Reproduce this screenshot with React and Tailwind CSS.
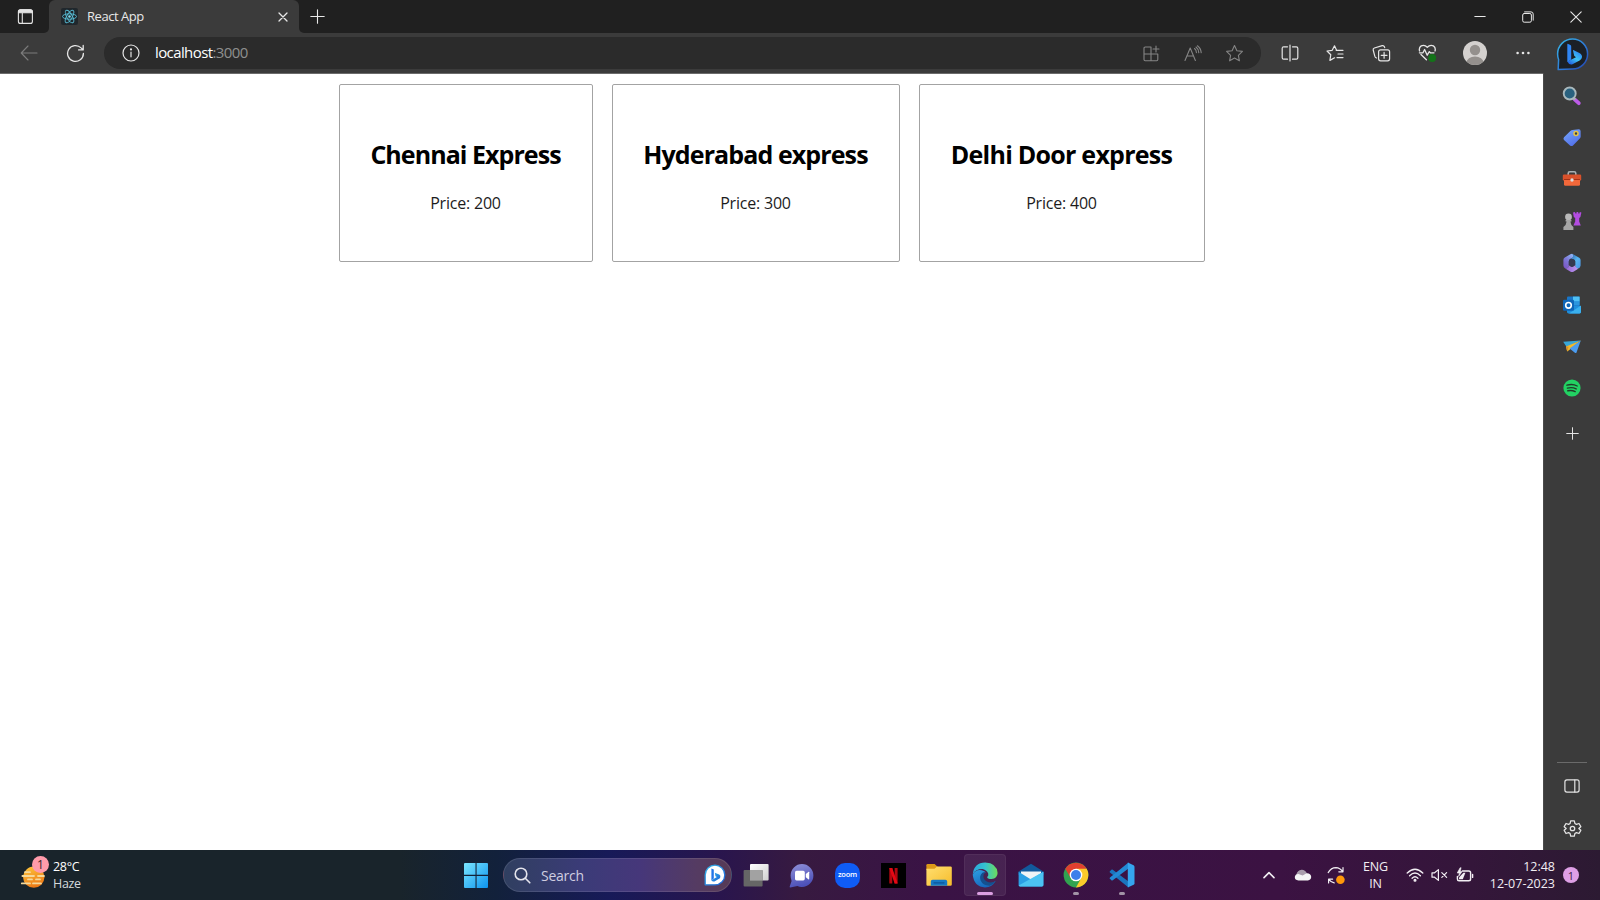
import React from "react";

const line = { fill: "none", stroke: "currentColor", strokeLinecap: "round", strokeLinejoin: "round" };

/* Icon cell: a fixed-width flex slot that centres its drawing */
function Cell({ className = "", children }) {
  return <div className={`flex h-full shrink-0 items-center justify-center ${className}`}>{children}</div>;
}

/* ---------- Title bar ---------- */
function TabActionsIcon() {
  return (
    <svg width="17" height="17" viewBox="0 0 17 17" className="text-[#e4e4e4]" {...line} strokeWidth="1.1">
      <rect x="1.4" y="1.8" width="14" height="13.6" rx="2" />
      <path d="M1.5 3.8Q1.5 1.8 3.5 1.8H13.3Q15.3 1.8 15.3 3.8V4.8H1.5Z" fill="currentColor" />
      <path d="M5.3 5V15" />
    </svg>
  );
}

function ReactIcon() {
  return (
    <svg width="17" height="17" viewBox="0 0 17 17" fill="none" stroke="#58bfd8" strokeWidth="0.9">
      <rect width="17" height="17" rx="2" fill="#20272c" stroke="none" />
      <ellipse cx="8.5" cy="8.5" rx="7" ry="2.7" />
      <ellipse cx="8.5" cy="8.5" rx="7" ry="2.7" transform="rotate(60 8.5 8.5)" />
      <ellipse cx="8.5" cy="8.5" rx="7" ry="2.7" transform="rotate(120 8.5 8.5)" />
      <circle cx="8.5" cy="8.5" r="1.3" fill="#7fdcf0" stroke="none" />
    </svg>
  );
}

function TitleBar() {
  return (
    <header className="flex h-[33px] bg-[linear-gradient(90deg,#3b3b3b_0_320px,#202020_320px)] text-[#e8e8e8]">
      <div className="flex w-[49px] items-center justify-center rounded-br-[5px] bg-[#202020] pl-px">
        <TabActionsIcon />
      </div>
      <div className="flex w-[250px] bg-[#202020]">
        <div className="flex flex-1 items-center rounded-t-[6px] bg-[#3b3b3b] pl-3">
          <ReactIcon />
          <span className="ml-[9px] flex-1 text-[13px] tracking-[-0.45px] whitespace-nowrap">React App</span>
          <svg width="10" height="10" viewBox="0 0 10 10" className="mr-[11px] mt-px" {...line} strokeWidth="1.3">
            <path d="M1 1L9 9M9 1L1 9" />
          </svg>
        </div>
      </div>
      <Cell className="w-9 rounded-bl-[5px] bg-[#202020]">
        <svg width="15" height="15" viewBox="0 0 15 15" {...line} strokeWidth="1.1">
          <path d="M7.5 0.8V14.2M0.8 7.5H14.2" />
        </svg>
      </Cell>
      <div className="flex-1" />
      <Cell className="w-12">
        <svg width="12" height="12" viewBox="0 0 12 12" {...line} strokeWidth="1"><path d="M0.8 5.5H11.2" /></svg>
      </Cell>
      <Cell className="w-[47px]">
        <svg width="12" height="12" viewBox="0 0 12 12" {...line} strokeWidth="1">
          <rect x="0.7" y="2.5" width="8.7" height="8.7" rx="1.5" />
          <path d="M2.6 0.9H9Q11.2 0.9 11.2 3.1V9.2" />
        </svg>
      </Cell>
      <Cell className="w-[49px]">
        <svg width="12" height="12" viewBox="0 0 12 12" {...line} strokeWidth="1.1"><path d="M0.8 0.8L11.2 11.2M11.2 0.8L0.8 11.2" /></svg>
      </Cell>
    </header>
  );
}

/* ---------- Toolbar ---------- */
function BingChat() {
  return (
    <svg width="34" height="34" viewBox="0 0 34 34">
      <defs>
        <linearGradient id="bcRing" x1="0" y1="0" x2="1" y2="1">
          <stop offset="0" stopColor="#39b7e6" /><stop offset="0.6" stopColor="#2c74d4" /><stop offset="1" stopColor="#2340a8" />
        </linearGradient>
        <linearGradient id="bcB" x1="0.8" y1="0" x2="0.1" y2="1">
          <stop offset="0" stopColor="#2a7df0" /><stop offset="0.5" stopColor="#3fc3f3" /><stop offset="1" stopColor="#1e55e0" />
        </linearGradient>
      </defs>
      <path d="M2.6 22.5Q1.6 19.8 1.6 17A15 15 0 1 1 16.6 32L2.2 32.6Z" fill="#1b2026" stroke="url(#bcRing)" strokeWidth="1.5" strokeLinejoin="round" />
      <path d="M11.3 7.4Q11.3 6.6 12.2 7L14.4 8Q15.2 8.4 15.2 9.4V22.4L11.3 25Z" fill="#2f86f5" />
      <path d="M17 13.6Q16.8 12.8 17.8 13.2L23.4 16Q26.8 18 25.8 21Q25.3 22.4 23.6 23.4L16 27.4Q12.8 28 11.3 24.6L20 20.2L18.2 18.8Z" fill="url(#bcB)" />
    </svg>
  );
}

const starPath = "M9.5 1.6L11.9 6.7L17.4 7.4L13.4 11.3L14.4 16.8L9.5 14.1L4.6 16.8L5.6 11.3L1.6 7.4L7.1 6.7Z";

function Toolbar() {
  return (
    <div className="flex h-10 items-center bg-[#3b3b3b] text-[#e6e6e6]">
      <Cell className="w-[58px] text-[#7c7c7c]">
        <svg width="18" height="16" viewBox="0 0 18 16" {...line} strokeWidth="1.1"><path d="M17 8H1.2M8 1L1.2 8L8 15" /></svg>
      </Cell>
      <Cell className="w-[34px]">
        <svg width="19" height="19" viewBox="0 0 19 19" {...line} strokeWidth="1.3">
          <path d="M17.4 9.5A7.9 7.9 0 1 1 15.1 3.9L17 5.7M17.2 1.4V5.9H12.6" />
        </svg>
      </Cell>
      <div className="ml-3 flex h-8 w-[1157px] items-center rounded-full bg-[#2b2b2b]">
        <Cell className="ml-[9px] w-9">
          <svg width="18" height="18" viewBox="0 0 18 18" {...line} strokeWidth="1.2">
            <circle cx="9" cy="9" r="8" /><path d="M9 8V12.8" /><circle cx="9" cy="5.4" r="0.5" fill="currentColor" />
          </svg>
        </Cell>
        <span className="ml-[6px] flex-1 pb-px text-[15px] tracking-[-0.6px] text-white">
          localhost<span className="text-[#8f8f8f]">:3000</span>
        </span>
        <Cell className="w-[42px] text-[#858585]">
          <svg width="17" height="17" viewBox="0 0 17 17" {...line} strokeWidth="1.1">
            <path d="M8 2H2.2Q1 2 1 3.2V14.6Q1 15.8 2.2 15.8H13.6Q14.8 15.8 14.8 14.6V9H1M8 2V15.8M13 1V7M10 4H16" />
          </svg>
        </Cell>
        <Cell className="w-[41px] text-[#858585]">
          <svg width="18" height="17" viewBox="0 0 18 17" {...line} strokeWidth="1.1">
            <path d="M1 15.5L6.2 3L11.4 15.5M2.9 11H9.5M10.5 3.5Q12.4 5 12.4 7.6M12 2Q14.6 4 14.8 7.6M13.4 0.8Q16.8 3.2 17.2 7.6" />
          </svg>
        </Cell>
        <Cell className="mr-[6px] w-[42px] text-[#858585]">
          <svg width="19" height="19" viewBox="0 0 19 19" {...line} strokeWidth="1.1"><path d={starPath} /></svg>
        </Cell>
      </div>
      <Cell className="ml-[6px] w-[45px]">
        <svg width="18" height="18" viewBox="0 0 18 18" {...line} strokeWidth="1.2">
          <path d="M6.5 2.8H2.7Q1.2 2.8 1.2 4.3V13.7Q1.2 15.2 2.7 15.2H6.5M11.5 2.8H15.3Q16.8 2.8 16.8 4.3V13.7Q16.8 15.2 15.3 15.2H11.5M9 1V17" />
        </svg>
      </Cell>
      <Cell className="w-[46px]">
        <svg width="18" height="18" viewBox="0 0 18 18" {...line} strokeWidth="1.2">
          <path d="M10.6 6.3L8.5 1.8L6.2 6.3L1 7L4.8 10.7L3.9 16.4L8.6 13.8M10.2 6.3H17M12 10H17M11 13.6H17" />
        </svg>
      </Cell>
      <Cell className="w-[46px]">
        <svg width="19" height="18" viewBox="0 0 19 18" {...line} strokeWidth="1.2">
          <rect x="6.6" y="5.8" width="11" height="11" rx="2" />
          <path d="M12.1 8.4V14.2M9.2 11.3H15M4.5 14Q3.2 13.6 2.8 12.2L1.2 6Q0.9 4.5 2.4 4L10.2 1.6Q11.8 1.2 12.4 2.8L12.7 3.6" />
        </svg>
      </Cell>
      <Cell className="w-[46px]">
        <svg width="19" height="18" viewBox="0 0 19 18" {...line} strokeWidth="1.3">
          <path d="M1.6 7Q0.6 3.6 3.2 1.9Q6.6 0.4 9.3 3.3Q12 0.4 15.4 1.9Q18 3.6 17 7M3 10.5L8.4 15.8M1.4 8.8H5L6.6 5.5L9.2 11.2L11.3 7.6L12.4 8.8H16" />
          <circle cx="14.2" cy="14" r="3.9" fill="#137319" stroke="none" />
        </svg>
      </Cell>
      <Cell className="w-[49px]">
        <svg width="24" height="24" viewBox="0 0 24 24">
          <clipPath id="avatarClip"><circle cx="12" cy="12" r="12" /></clipPath>
          <g clipPath="url(#avatarClip)">
            <rect width="24" height="24" fill="#d4d1cf" />
            <circle cx="12" cy="9" r="5.2" fill="#94908d" />
            <ellipse cx="12" cy="21.5" rx="8.5" ry="6" fill="#94908d" />
          </g>
        </svg>
      </Cell>
      <Cell className="w-12">
        <svg width="14" height="4" viewBox="0 0 14 4" fill="currentColor">
          <circle cx="1.6" cy="2" r="1.3" /><circle cx="7" cy="2" r="1.3" /><circle cx="12.4" cy="2" r="1.3" />
        </svg>
      </Cell>
      <Cell className="w-[51px] pt-px"><BingChat /></Cell>
    </div>
  );
}

/* ---------- Page content ---------- */
const buses = [
  { name: "Chennai Express", price: 200, width: "w-[254px]", track: "tracking-[-0.95px]" },
  { name: "Hyderabad express", price: 300, width: "w-[288px]", track: "tracking-[-0.9px]" },
  { name: "Delhi Door express", price: 400, width: "w-[286px]", track: "tracking-[-0.75px]" },
];

function Page() {
  return (
    <main className="flex flex-1 items-start justify-center gap-[19px] border-t border-[#6b6b6b] bg-white pt-[10px] text-black">
      {buses.map((b) => (
        <section
          key={b.name}
          className={`flex h-[178px] flex-col items-center rounded-[2px] border border-[#a3a3a3] pt-[50px] ${b.width}`}
        >
          <h2 className={`text-[25px] leading-[38px] font-bold whitespace-nowrap ${b.track}`}>{b.name}</h2>
          <p className="mt-[18px] text-[16px] leading-[24px] tracking-[-0.2px] text-[#1c1c1c]">Price: {b.price}</p>
        </section>
      ))}
    </main>
  );
}

/* ---------- Sidebar ---------- */
function SearchColor() {
  return (
    <svg width="20" height="20" viewBox="0 0 20 20">
      <path d="M12.6 13.4L16.8 17.2" stroke="#bd5be8" strokeWidth="3.8" strokeLinecap="round" />
      <path d="M10.8 11.2L13.2 13.6" stroke="#a9adb0" strokeWidth="2.4" />
      <circle cx="7.7" cy="7.5" r="6" fill="#29617f" stroke="#a9b8bd" strokeWidth="1.9" />
    </svg>
  );
}
function TagIcon() {
  return (
    <svg width="20" height="20" viewBox="0 0 20 20">
      <defs><linearGradient id="tag" x1="0.2" y1="0" x2="0.8" y2="1"><stop stopColor="#75a4fa" /><stop offset="1" stopColor="#4f6be8" /></linearGradient></defs>
      <path d="M10.5 2L16.8 1.3Q18.5 1.3 18.6 3L18.7 8.6Q18.6 9.6 18 10.3L11 17.6Q9.5 18.7 8 17.4L2 12Q0.9 10.7 2 9.3L8.6 2.8Q9.4 2.1 10.5 2Z" fill="url(#tag)" />
      <circle cx="14" cy="5.6" r="2" fill="#38404a" stroke="#e7c443" strokeWidth="1.5" />
    </svg>
  );
}
function ToolboxIcon() {
  return (
    <svg width="20" height="20" viewBox="0 0 20 20">
      <path d="M6.2 6V4.4Q6.2 2.8 7.8 2.8H12.2Q13.8 2.8 13.8 4.4V6" fill="none" stroke="#a9b0b3" strokeWidth="1.6" />
      <rect x="0.8" y="5.6" width="18.4" height="6" rx="1.2" fill="#d9512b" />
      <path d="M2 11H18V15.4Q18 16.8 16.6 16.8H3.4Q2 16.8 2 15.4Z" fill="#f2683a" />
      <path d="M2 10.5H18" stroke="#a53216" strokeWidth="1" />
      <circle cx="10" cy="11" r="1.7" fill="#dedede" />
    </svg>
  );
}
function ChessIcon() {
  return (
    <svg width="20" height="20" viewBox="0 0 20 20">
      <path d="M11 1.6L13 1L13.4 2.4H14.4L14.6 1H16.2L16.4 2.4H17.4L17.8 1L19.4 1.6L18.4 6L17.2 7V10.5L18.8 14.4H11.4L13.2 10.5V7L11.8 6Z" fill="#b24ce0" />
      <circle cx="6.5" cy="6" r="3.4" fill="#b9b9b9" />
      <path d="M3.6 9H9.4V10.4H8.4Q8.6 13.8 11.4 16V19H1.4V16Q4.4 13.8 4.6 10.4H3.6Z" fill="#a5a5a5" />
    </svg>
  );
}
function M365Icon() {
  return (
    <svg width="20" height="20" viewBox="0 0 20 20">
      <defs>
        <linearGradient id="m1" x1="0.8" y1="0" x2="0.2" y2="1"><stop stopColor="#8fb6f5" /><stop offset="0.5" stopColor="#7d78d8" /><stop offset="1" stopColor="#7a55c4" /></linearGradient>
        <linearGradient id="m2" x1="0" y1="0" x2="1" y2="1"><stop stopColor="#2f62a8" /><stop offset="0.5" stopColor="#57b5f0" /><stop offset="1" stopColor="#4a93e6" /></linearGradient>
        <linearGradient id="m3" x1="0" y1="0" x2="1" y2="0"><stop stopColor="#8f63d2" /><stop offset="1" stopColor="#c39bf2" /></linearGradient>
      </defs>
      <path d="M10.5 0.9Q9.4 0.7 8.4 1.3L2.8 4.6Q1.4 5.5 1.4 7.1V12.6Q1.4 14.8 3.4 15.6Q6.6 15.8 6.8 12.6V8.6Q6.8 7 8.2 6.1L11.4 4.2Q12.6 2.2 10.5 0.9Z" fill="url(#m1)" />
      <path d="M10.5 0.9L17.2 4.7Q18.6 5.5 18.6 7.1V12.6Q18.4 15 16 15.6Q13.2 15.4 13.2 12.6V8.6Q13.2 7.2 12 6.4L8.8 5.8Q12.6 4 10.5 0.9Z" fill="url(#m2)" />
      <path d="M3.2 15.5Q6.8 15.6 6.8 12L8.8 13.4Q10 14.1 11.2 13.4L13.2 12Q13.4 15.4 16.6 15.5L11.4 18.7Q10 19.5 8.6 18.7Z" fill="url(#m3)" />
      <path d="M8.8 5.8L12 6.4Q13.2 7.2 13.2 8.6V12L11.2 13.4Q10 14.1 8.8 13.4L6.8 12V8.6Q6.8 7 8.2 6.1Z" fill="#353a50" />
    </svg>
  );
}
function OutlookIcon() {
  return (
    <svg width="20" height="20" viewBox="0 0 20 20">
      <rect x="5" y="1.6" width="12.6" height="11" rx="1" fill="#1976c8" />
      <rect x="11" y="1.6" width="6.6" height="5" fill="#4fc0f4" />
      <rect x="11" y="6.4" width="6.6" height="4" fill="#2b96de" />
      <path d="M5 11H19V17Q19 18.4 17.6 18.4H6.4Q5 18.4 5 17Z" fill="#1e8fdd" />
      <path d="M19 10.5L7 18.4H17.6Q19 18.4 19 17Z" fill="#3ab0ee" />
      <rect x="1" y="4.8" width="11" height="11" rx="1.2" fill="#0f66b8" />
      <circle cx="6.5" cy="10.3" r="2.8" fill="none" stroke="#fff" strokeWidth="1.6" />
    </svg>
  );
}
function DropIcon() {
  return (
    <svg width="20" height="20" viewBox="0 0 20 20">
      <path d="M1.2 4.8L18.8 3.4L4.8 10.2Z" fill="#39a7d8" />
      <path d="M18.8 3.4L4 9.4L5.2 14.6Q7 13.4 8.6 12Z" fill="#f2b92c" />
      <path d="M4 9.4L6.6 9.8L5.2 14.6Z" fill="#d9902a" />
      <path d="M18.8 3.4L7.6 11.6L13.2 16Q14.2 16.4 14.6 15.2Z" fill="#4b9cf0" />
    </svg>
  );
}
function SpotifyIcon() {
  return (
    <svg width="18" height="18" viewBox="0 0 18 18">
      <circle cx="9" cy="9" r="8.6" fill="#22d263" />
      <path d="M4 6.2Q9.6 4.6 14.2 7M4.4 9.1Q9.2 7.8 13.2 9.9M4.8 11.8Q8.8 10.8 12.2 12.6" fill="none" stroke="#203c29" strokeWidth="1.4" strokeLinecap="round" />
    </svg>
  );
}

const sidebarApps = [SearchColor, TagIcon, ToolboxIcon, ChessIcon, M365Icon, OutlookIcon, DropIcon, SpotifyIcon];

function Sidebar() {
  return (
    <aside className="flex w-[57px] shrink-0 flex-col items-center border-l border-[#4a4a4a] bg-[#3b3b3b] pt-[2px] text-[#e4e4e4]">
      {sidebarApps.map((Icon, i) => (
        <div key={i} className="flex h-[41.8px] w-full shrink-0 items-center justify-center"><Icon /></div>
      ))}
      <div className="flex h-[49px] items-center">
        <svg width="13" height="13" viewBox="0 0 13 13" {...line} strokeWidth="1"><path d="M6.5 0.7V12.3M0.7 6.5H12.3" /></svg>
      </div>
      <div className="flex-1" />
      <div className="h-px w-[30px] bg-[#6a6a6a]" />
      <div className="flex h-[45px] items-center">
        <svg width="16" height="14" viewBox="0 0 16 14" {...line} strokeWidth="1.2"><rect x="0.9" y="0.9" width="14.2" height="12.2" rx="2" /><path d="M10.8 1V13" /></svg>
      </div>
      <div className="mb-[2px] flex h-10 items-center">
        <svg width="19" height="19" viewBox="0 0 24 24" {...line} strokeWidth="1.6">
          <path d="M9.7 2.3H14.3L15 5.6L17 6.8L20.2 5.7L22.5 9.7L20 12L22.5 14.3L20.2 18.3L17 17.2L15 18.4L14.3 21.7H9.7L9 18.4L7 17.2L3.8 18.3L1.5 14.3L4 12L1.5 9.7L3.8 5.7L7 6.8L9 5.6Z" />
          <circle cx="12" cy="12" r="2.8" />
        </svg>
      </div>
    </aside>
  );
}

/* ---------- Taskbar ---------- */
function HazeIcon() {
  return (
    <svg width="30" height="30" viewBox="0 0 30 30">
      <defs><linearGradient id="sun" x1="0" y1="0" x2="0.4" y2="1"><stop stopColor="#ffc83c" /><stop offset="1" stopColor="#ec7a16" /></linearGradient></defs>
      <circle cx="13.8" cy="18.2" r="10.6" fill="url(#sun)" />
      <path d="M5 13.2H10M2.4 17H14M18 17H24M8 20.4H12M16 20.4H20M1.8 24.4H10M13 24.4H21" stroke="#f5d899" strokeWidth="1.8" strokeLinecap="round" />
    </svg>
  );
}
function WindowsLogo() {
  return (
    <svg width="24" height="25" viewBox="0 0 24 25">
      <defs><linearGradient id="win" x1="0" y1="0" x2="1" y2="1"><stop stopColor="#7be6ff" /><stop offset="1" stopColor="#0c93ee" /></linearGradient></defs>
      <path d="M1 0H11.5V11.8H0V1Q0 0 1 0ZM12.6 0H23Q24 0 24 1V11.8H12.6ZM0 13H11.5V25H1Q0 25 0 24ZM12.6 13H24V24Q24 25 23 25H12.6Z" fill="url(#win)" />
    </svg>
  );
}
function BingSmall() {
  return (
    <svg width="22" height="22" viewBox="0 0 22 22">
      <defs><linearGradient id="bs" x1="0" y1="0" x2="1" y2="1"><stop stopColor="#35b6e8" /><stop offset="1" stopColor="#1b5fd8" /></linearGradient></defs>
      <path d="M1.2 11A9.8 9.8 0 1 1 11 20.8H1.2Z" fill="#fff" stroke="url(#bs)" strokeWidth="1.3" strokeLinejoin="round" />
      <path d="M7.4 4.4L9.8 5.4V14.6L7.4 16.4Z" fill="#2376e8" />
      <path d="M10.8 8.7L15.2 10.6Q17 11.6 16.2 13.5Q15.8 14.5 14.6 15.1L10.4 17.4Q8.4 18 7.4 16.2L12.9 13.1L11.5 12.2Z" fill="url(#bs)" />
    </svg>
  );
}
function TaskView() {
  return (
    <svg width="26" height="26" viewBox="0 0 26 26">
      <defs><linearGradient id="tv" x1="0" y1="0" x2="1" y2="1"><stop stopColor="#ffffff" /><stop offset="1" stopColor="#cfcfcf" /></linearGradient></defs>
      <rect x="7" y="2" width="18.6" height="16.6" rx="1" fill="url(#tv)" />
      <rect x="0.6" y="8" width="19" height="16.4" rx="1" fill="#666" />
      <rect x="7" y="8" width="12.6" height="10.6" fill="#a2a2a2" />
    </svg>
  );
}
function ChatIcon() {
  return (
    <svg width="25" height="25" viewBox="0 0 25 25">
      <defs><linearGradient id="chat" x1="0" y1="0" x2="0.3" y2="1"><stop stopColor="#9091d8" /><stop offset="1" stopColor="#4c50b8" /></linearGradient></defs>
      <path d="M1.6 12.5A11.4 11.4 0 1 1 13 23.9Q10.4 24 8.4 23L1.4 24.4Q0.4 24.4 0.7 23.4L2.6 18Q1.6 15.4 1.6 12.5Z" fill="url(#chat)" />
      <rect x="6" y="7.8" width="9.8" height="9.6" rx="1.6" fill="#fff" />
      <path d="M16.8 11L19.6 8.8Q20.2 8.6 20.2 9.2V16Q20.2 16.6 19.6 16.4L16.8 14.2Z" fill="#fff" />
    </svg>
  );
}
function ZoomLogo() {
  return (
    <div className="flex size-[25px] items-center justify-center rounded-[10px] bg-[#0f5cf5] pb-px text-[7.5px] font-semibold tracking-[-0.2px] text-white">
      zoom
    </div>
  );
}
function NetflixLogo() {
  return (
    <svg width="25" height="25" viewBox="0 0 25 25">
      <rect width="25" height="25" fill="#000" />
      <rect x="8.3" y="5" width="3" height="15.5" fill="#b20710" />
      <rect x="13.6" y="5" width="3" height="15.5" fill="#b20710" />
      <polygon points="8.3,5 11.3,5 16.6,20.5 13.6,20.5" fill="#e50914" />
    </svg>
  );
}
function FolderIcon() {
  return (
    <svg width="26" height="24" viewBox="0 0 26 24">
      <defs><linearGradient id="fold" x1="0" y1="0" x2="1" y2="1"><stop stopColor="#ffdf70" /><stop offset="1" stopColor="#f6bc2c" /></linearGradient></defs>
      <path d="M0.4 2.2Q0.4 1 1.6 1H8.6L11.4 3.4V7H0.4Z" fill="#dc9a18" />
      <path d="M0.4 5.8H8.6L11 3.4H24.4Q25.8 3.4 25.8 4.6V21.6Q25.8 22.8 24.4 22.8H1.6Q0.4 22.8 0.4 21.6Z" fill="url(#fold)" />
      <path d="M4.8 22.8V18.6Q4.8 16.8 6.6 16.8H19.4Q21.2 16.8 21.2 18.6V22.8Z" fill="#1679c4" />
      <path d="M8 19.8H18" stroke="#0c5596" strokeWidth="1.3" strokeLinecap="round" />
    </svg>
  );
}
function EdgeIcon() {
  return (
    <svg width="26" height="26" viewBox="0 0 26 26">
      <defs>
        <linearGradient id="e1" x1="0" y1="0.3" x2="1" y2="0.3"><stop stopColor="#2aa5dc" /><stop offset="0.5" stopColor="#35c3cf" /><stop offset="1" stopColor="#6ddc5a" /></linearGradient>
        <linearGradient id="e2" x1="0" y1="0" x2="0.5" y2="1"><stop stopColor="#2c9fe2" /><stop offset="1" stopColor="#1667bd" /></linearGradient>
      </defs>
      <path d="M0.8 12Q2 0.8 13.2 0.5Q24.8 1 25.6 11Q25.4 16.6 19.6 17Q15 17 15.2 14.9Q16.8 13.6 16.2 11.4Q15 8.4 10.6 7Q4 6.8 0.8 12Z" fill="url(#e1)" />
      <path d="M0.7 12.6Q3.6 7 9.8 8.2Q13 9 13.8 10.6Q9.8 10.2 9.2 14.4Q9 20.2 16 21.2Q20.6 21.4 23.6 19Q20 25.5 13 25.5Q2 25 0.7 12.6Z" fill="url(#e2)" />
      <path d="M10.4 10.8Q7 14 8.6 18.6Q11 23.8 17.6 23.8Q21.6 22.6 23.8 19.2Q19 21.5 14.8 19.6Q10.6 17.4 11.6 12.8Q12.2 11.4 13.8 10.6Q12 10 10.4 10.8Z" fill="#14508f" />
    </svg>
  );
}
function MailIcon() {
  return (
    <svg width="26" height="24" viewBox="0 0 26 24">
      <path d="M0.6 8.6L13 0.8L25.4 8.6V12H0.6Z" fill="#12599c" />
      <path d="M3 8.5H23V16H3Z" fill="#f1f4f6" />
      <path d="M0.6 8.8L13 16.4L25.4 8.8V22Q25.4 23.4 24 23.4H2Q0.6 23.4 0.6 22Z" fill="#2b9fe4" />
      <path d="M25.4 8.8V22Q25.4 23.4 24 23.4H2Q1 23.4 0.6 22.6Z" fill="#4cc3f2" />
    </svg>
  );
}
function ChromeIcon() {
  return (
    <svg width="26" height="26" viewBox="0 0 26 26">
      <circle cx="13" cy="13" r="12.4" fill="#31a350" />
      <path d="M2.3 6.8A12.4 12.4 0 0 1 23.7 6.8L13 7.2L7.7 16Z" fill="#e0402f" />
      <path d="M13 6.8H23.7A12.4 12.4 0 0 1 13 25.4L18.2 16Z" fill="#fccb2a" />
      <circle cx="13" cy="13" r="6.3" fill="#fff" />
      <circle cx="13" cy="13" r="5" fill="#3d80ea" />
    </svg>
  );
}
function VSCodeIcon() {
  return (
    <svg width="26" height="26" viewBox="0 0 26 26">
      <path d="M3.4 7.6L19.5 19.6V25.4L1 10.6Q0.2 9.8 0.9 9.2L2.4 7.7Q2.9 7.2 3.4 7.6Z" fill="#1b74bd" />
      <path d="M3.4 18.4L19.5 6.4V0.6L1 15.4Q0.2 16.2 0.9 16.8L2.4 18.3Q2.9 18.8 3.4 18.4Z" fill="#2389d4" />
      <path d="M18.8 0.5L24.6 3.2Q25.5 3.7 25.5 4.7V21.3Q25.5 22.3 24.6 22.8L18.8 25.5Z" fill="#35a5ee" />
    </svg>
  );
}

const taskbarApps = [
  { Icon: TaskView },
  { Icon: ChatIcon },
  { Icon: ZoomLogo },
  { Icon: NetflixLogo },
  { Icon: FolderIcon },
  { Icon: EdgeIcon, active: true },
  { Icon: MailIcon },
  { Icon: ChromeIcon, running: true },
  { Icon: VSCodeIcon, running: true },
];

function TaskbarApp({ Icon, active, running }) {
  return (
    <div className="flex h-full w-[45.8px] shrink-0 items-center justify-center">
      <div className={`relative flex h-[42px] w-[42px] items-center justify-center rounded-[4px] ${active ? "border border-white/5 bg-white/[0.07]" : ""}`}>
        <Icon />
        {active && <span className="absolute bottom-0 h-[3px] w-4 rounded-full bg-[#dc9fe2]" />}
        {running && <span className="absolute bottom-px h-[3px] w-[6px] rounded-full bg-[#a294a6]" />}
      </div>
    </div>
  );
}

function Taskbar() {
  return (
    <footer className="flex h-[50px] items-center bg-[linear-gradient(90deg,#19242b_0%,#19242b_25%,#12213b_31%,#171a58_38%,#29154d_45%,#371a40_50%,#3a1345_58%,#3b1242_80%,#34163a_92%,#2c1a32_100%)] text-white">
      <div className="relative ml-5 h-[50px] w-[30px] pt-[9px]">
        <HazeIcon />
        <span className="absolute top-[6px] left-[12px] flex size-[17px] items-center justify-center rounded-full bg-[#ff9bab] text-[12px] leading-none text-[#3a2226]">1</span>
      </div>
      <div className="ml-[3px] w-[411px] pb-px text-[12.5px] leading-[17px] tracking-[-0.3px]">
        <div>28°C</div>
        <div className="text-[#d5d9db]">Haze</div>
      </div>
      <WindowsLogo />
      <div className="ml-[15px] flex h-[34px] w-[229px] shrink-0 items-center rounded-full border border-white/10 bg-[linear-gradient(90deg,#303f60_0%,#3b3b78_35%,#46377a_60%,#553b62_85%,#563a56_100%)]">
        <svg width="17" height="17" viewBox="0 0 17 17" className="ml-[10px] text-[#e4e4ec]" {...line} strokeWidth="1.6">
          <circle cx="7" cy="7" r="5.8" /><path d="M11.3 11.3L15.8 15.8" />
        </svg>
        <span className="ml-[10px] flex-1 text-[14px] tracking-[-0.25px] text-[#cfcde0]">Search</span>
        <span className="mr-[5px]"><BingSmall /></span>
      </div>
      <div className="ml-px flex h-full">
        {taskbarApps.map((app, i) => <TaskbarApp key={i} {...app} />)}
      </div>
      <div className="flex-1" />
      <div className="flex h-full shrink-0 items-center text-[#f2eef3]">
        <Cell className="w-[34px]">
          <svg width="12" height="8" viewBox="0 0 12 8" {...line} strokeWidth="1.6"><path d="M1 6.6L6 1.6L11 6.6" /></svg>
        </Cell>
        <Cell className="w-[33px]">
          <svg width="18" height="12" viewBox="0 0 18 12">
            <path d="M2.2 6.2Q3.4 1 7.6 0.8Q11 0.6 13 4.4L8 9Z" fill="#a99dac" />
            <path d="M4.4 11.4Q0.8 11.2 0.8 8Q1.2 5.2 4.4 5L8.6 6.4L12.6 4.2Q16.8 4 17.2 7.8Q17.2 11.2 13.8 11.4Z" fill="#f5f5f5" />
          </svg>
        </Cell>
        <Cell className="w-[33px]">
          <svg width="18" height="19" viewBox="0 0 18 19" {...line} strokeWidth="1.2">
            <path d="M1.2 6.6Q4 1.6 9 1.6Q13 1.8 15.8 5.6M16 1.6V5.8H11.8M7.2 16.9Q4 16.4 1.8 13.4M1.6 17V13.2H5.6" />
            <circle cx="13.4" cy="13.8" r="4.3" fill="#ff980a" stroke="none" />
          </svg>
        </Cell>
        <div className="w-[47px] text-center text-[12.5px] leading-[17px] tracking-[-0.2px]">ENG<br />IN</div>
        <Cell className="w-8">
          <svg width="18" height="14" viewBox="0 0 18 14" {...line} strokeWidth="1.3">
            <path d="M1.2 5Q9 -2.6 16.8 5M3.6 7.7Q9 2.4 14.4 7.7M6.1 10.2Q9 7.4 11.9 10.2" />
            <circle cx="9" cy="12.2" r="0.9" fill="currentColor" />
          </svg>
        </Cell>
        <Cell className="w-[17px]">
          <svg width="17" height="14" viewBox="0 0 17 14" {...line} strokeWidth="1.2">
            <path d="M1 4.8H3.6L7.4 1.6V12.4L3.6 9.2H1ZM10.8 4.6L15.6 9.4M15.6 4.6L10.8 9.4" />
          </svg>
        </Cell>
        <Cell className="w-[34px]">
          <svg width="18" height="16" viewBox="0 0 18 16" {...line} strokeWidth="1.4">
            <path d="M6.5 4H12.8Q14.6 4 14.6 5.8V12Q14.6 13.8 12.8 13.8H3Q1.4 13.8 1.4 12V9.5M16.6 7.5V10.4" />
            <path d="M4 1L1.2 6H3.4L2.6 9.4L6.2 4.4H4.2L5 1Z" fill="currentColor" strokeWidth="0.6" />
            <path d="M3 12.2V10.5L7.4 5.8H9.4L6.8 12.2Z" fill="currentColor" stroke="none" />
          </svg>
        </Cell>
        <div className="w-[73px] text-right text-[12.5px] leading-[17px] tracking-[0px] whitespace-nowrap">12:48<br />12-07-2023</div>
        <span className="mr-[21px] ml-[8px] flex size-4 items-center justify-center rounded-full bg-[#df9fe6] text-[11px] leading-none text-[#402544]">1</span>
      </div>
    </footer>
  );
}

export default function App() {
  return (
    <div className="flex h-[900px] w-[1600px] flex-col overflow-hidden bg-white font-['Open_Sans','Noto_Sans',sans-serif]">
      <TitleBar />
      <Toolbar />
      <div className="flex min-h-0 flex-1">
        <Page />
        <Sidebar />
      </div>
      <Taskbar />
    </div>
  );
}
